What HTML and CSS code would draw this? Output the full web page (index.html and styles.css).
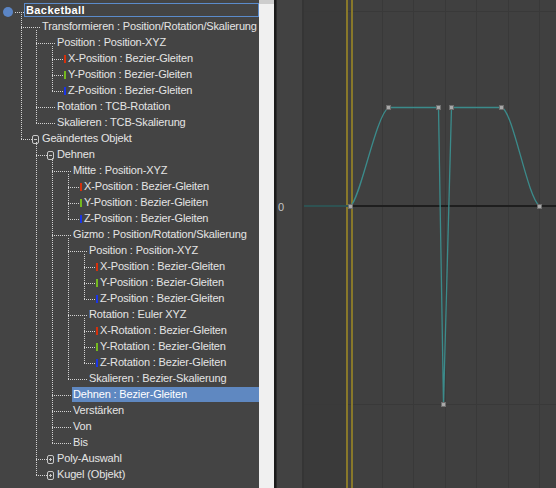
FILE: index.html
```html
<!DOCTYPE html>
<html lang="de">
<head>
    <meta charset="UTF-8">
    <title>Kurveneditor</title>
    <link rel="stylesheet" href="styles.css">
</head>
<body>
    <div class="editor">
        <div class="tree-panel">
            <ul class="tree">
                <li>
                    <div class="row root"><span class="ball"></span><span class="dots"></span><span class="label">Backetball</span></div>
                    <ul>
                        <li>
                            <div class="row"><span class="dots"></span><span class="label">Transformieren : Position/Rotation/Skalierung</span></div>
                            <ul>
                                <li>
                                    <div class="row"><span class="dots"></span><span class="label">Position : Position-XYZ</span></div>
                                    <ul>
                                        <li><div class="row axis"><span class="dots"></span><span class="bar x"></span><span class="label">X-Position : Bezier-Gleiten</span></div></li>
                                        <li><div class="row axis"><span class="dots"></span><span class="bar y"></span><span class="label">Y-Position : Bezier-Gleiten</span></div></li>
                                        <li><div class="row axis"><span class="dots"></span><span class="bar z"></span><span class="label">Z-Position : Bezier-Gleiten</span></div></li>
                                    </ul>
                                </li>
                                <li><div class="row"><span class="dots"></span><span class="label">Rotation : TCB-Rotation</span></div></li>
                                <li><div class="row"><span class="dots"></span><span class="label">Skalieren : TCB-Skalierung</span></div></li>
                            </ul>
                        </li>
                        <li>
                            <div class="row node"><span class="dots"></span><span class="box"></span><span class="label">Geändertes Objekt</span></div>
                            <ul>
                                <li>
                                    <div class="row node"><span class="dots"></span><span class="box"></span><span class="label">Dehnen</span></div>
                                    <ul>
                                        <li>
                                            <div class="row"><span class="dots"></span><span class="label">Mitte : Position-XYZ</span></div>
                                            <ul>
                                                <li><div class="row axis"><span class="dots"></span><span class="bar x"></span><span class="label">X-Position : Bezier-Gleiten</span></div></li>
                                                <li><div class="row axis"><span class="dots"></span><span class="bar y"></span><span class="label">Y-Position : Bezier-Gleiten</span></div></li>
                                                <li><div class="row axis"><span class="dots"></span><span class="bar z"></span><span class="label">Z-Position : Bezier-Gleiten</span></div></li>
                                            </ul>
                                        </li>
                                        <li>
                                            <div class="row"><span class="dots"></span><span class="label">Gizmo : Position/Rotation/Skalierung</span></div>
                                            <ul>
                                                <li>
                                                    <div class="row"><span class="dots"></span><span class="label">Position : Position-XYZ</span></div>
                                                    <ul>
                                                        <li><div class="row axis"><span class="dots"></span><span class="bar x"></span><span class="label">X-Position : Bezier-Gleiten</span></div></li>
                                                        <li><div class="row axis"><span class="dots"></span><span class="bar y"></span><span class="label">Y-Position : Bezier-Gleiten</span></div></li>
                                                        <li><div class="row axis"><span class="dots"></span><span class="bar z"></span><span class="label">Z-Position : Bezier-Gleiten</span></div></li>
                                                    </ul>
                                                </li>
                                                <li>
                                                    <div class="row"><span class="dots"></span><span class="label">Rotation : Euler XYZ</span></div>
                                                    <ul>
                                                        <li><div class="row axis"><span class="dots"></span><span class="bar x"></span><span class="label">X-Rotation : Bezier-Gleiten</span></div></li>
                                                        <li><div class="row axis"><span class="dots"></span><span class="bar y"></span><span class="label">Y-Rotation : Bezier-Gleiten</span></div></li>
                                                        <li><div class="row axis"><span class="dots"></span><span class="bar z"></span><span class="label">Z-Rotation : Bezier-Gleiten</span></div></li>
                                                    </ul>
                                                </li>
                                                <li><div class="row"><span class="dots"></span><span class="label">Skalieren : Bezier-Skalierung</span></div></li>
                                            </ul>
                                        </li>
                                        <li><div class="row selected"><span class="dots"></span><span class="label">Dehnen : Bezier-Gleiten</span></div></li>
                                        <li><div class="row"><span class="dots"></span><span class="label">Verstärken</span></div></li>
                                        <li><div class="row"><span class="dots"></span><span class="label">Von</span></div></li>
                                        <li><div class="row"><span class="dots"></span><span class="label">Bis</span></div></li>
                                    </ul>
                                </li>
                                <li><div class="row node closed"><span class="dots"></span><span class="box"></span><span class="label">Poly-Auswahl</span></div></li>
                                <li><div class="row node closed"><span class="dots"></span><span class="box"></span><span class="label">Kugel (Objekt)</span></div></li>
                            </ul>
                        </li>
                    </ul>
                </li>
            </ul>
        </div>

        <div class="scroll"></div>
        <div class="divider"></div>
        <div class="ruler"><span>0</span></div>

        <!-- Kurvenfenster: x = Bildschirm-x - 304 -->
        <svg class="curves" width="252" height="488" viewBox="0 0 252 488">
            <rect x="0" y="0" width="252" height="488" fill="#404040"/>
            <rect x="0" y="0" width="42" height="488" fill="#3a3a3a"/>

            <g stroke="#393939" stroke-width="1">
                <line x1="78.5" y1="0" x2="78.5" y2="488"/>
                <line x1="109.5" y1="0" x2="109.5" y2="488"/>
                <line x1="141.5" y1="0" x2="141.5" y2="488"/>
                <line x1="172.5" y1="0" x2="172.5" y2="488"/>
                <line x1="204.5" y1="0" x2="204.5" y2="488"/>
                <line x1="235.5" y1="0" x2="235.5" y2="488"/>
                <line x1="0" y1="11.5" x2="252" y2="11.5"/>
                <line x1="0" y1="404.5" x2="252" y2="404.5"/>
            </g>

            <rect x="42" y="0" width="2" height="488" fill="#88782a"/>
            <rect x="47" y="0" width="2" height="488" fill="#88782a"/>

            <rect x="0" y="205" width="46" height="2" fill="#2e5252"/>
            <rect x="46" y="205" width="206" height="2" fill="#1e1e1e"/>

            <path d="M46.5,206 C56,200 72,115 84.5,107.5 L134.5,107.5 L139.5,404.5 L147.5,107.5 L197.5,107.5 C209,110 223,197 235.5,206"
                  fill="none" stroke="#3b8b8b" stroke-width="1.3"/>

            <g fill="#6f6f6f">
                <rect x="44" y="204" width="5" height="5"/>
                <rect x="82" y="105" width="5" height="5"/>
                <rect x="132" y="105" width="5" height="5"/>
                <rect x="137" y="402" width="5" height="5"/>
                <rect x="145" y="105" width="5" height="5"/>
                <rect x="195" y="105" width="5" height="5"/>
                <rect x="233" y="204" width="5" height="5"/>
            </g>
            <g fill="#a9a9a9">
                <rect x="45" y="205" width="3" height="3"/>
                <rect x="83" y="106" width="3" height="3"/>
                <rect x="133" y="106" width="3" height="3"/>
                <rect x="138" y="403" width="3" height="3"/>
                <rect x="146" y="106" width="3" height="3"/>
                <rect x="196" y="106" width="3" height="3"/>
                <rect x="234" y="205" width="3" height="3"/>
            </g>
        </svg>
    </div>
</body>
</html>
```

FILE: styles.css
```css
body {
    margin: 0;
    background-color: #444444;
    font-family: "Liberation Sans", Arial, sans-serif;
    font-size: 11px;
}
.editor {
    display: flex;
    height: 488px;
    overflow: hidden;
}
.tree-panel {
    flex: none;
    width: 259px;
    padding-top: 2px;
    background-color: #444444;
    color: #e4e4e4;
    overflow: hidden;
}

/* Baum */
.tree, .tree ul {
    list-style: none;
    margin: 0;
    padding: 0;
}
.tree ul {
    position: relative;
    margin-left: 16px;
}
.tree > li > ul {
    margin-left: 21px;
}
.tree > li > ul > li > ul {
    margin-left: 15px;
}
.tree li {
    position: relative;
}
.tree ul > li::before,
.tree ul::before {
    content: "";
    position: absolute;
    left: 0;
    width: 1px;
    background: repeating-linear-gradient(to bottom, #d2d2d2 0 1px, transparent 1px 2px);
}
.tree ul > li::before {
    top: 0;
    bottom: 0;
}
.tree ul > li:last-child::before {
    bottom: auto;
    height: 10px;
}
.tree ul::before {
    top: -4px;
    height: 4px;
}
.tree > li > ul::before {
    top: -6px;
    height: 6px;
}

.row {
    display: flex;
    align-items: flex-start;
    height: 16px;
    line-height: 16px;
}
.dots {
    flex: none;
    width: 20px;
    height: 1px;
    margin-top: 9px;
    background: repeating-linear-gradient(to right, #d2d2d2 0 1px, transparent 1px 2px);
}
.label {
    flex: 1;
    min-width: 0;
    padding-left: 1px;
    white-space: nowrap;
    overflow: hidden;
    letter-spacing: -0.15px;
}

.row.node .dots,
.row.axis .dots {
    width: 11px;
}
.box {
    flex: none;
    position: relative;
    width: 5px;
    height: 7px;
    margin-top: 5px;
    margin-right: 2px;
    border: 1px solid #c8c8c8;
    border-radius: 2px;
}
.box::before {
    content: "";
    position: absolute;
    left: 1px;
    top: 3px;
    width: 3px;
    height: 1px;
    background-color: #c8c8c8;
}
.closed .box::after {
    content: "";
    position: absolute;
    left: 2px;
    top: 2px;
    width: 1px;
    height: 3px;
    background-color: #c8c8c8;
}

.bar {
    flex: none;
    width: 2px;
    height: 8px;
    margin: 5px 1px 0 1px;
}
.bar.x { background-color: #d4300c; }
.bar.y { background-color: #74b81e; }
.bar.z { background-color: #1a34e6; }

.root .ball {
    flex: none;
    width: 10px;
    height: 10px;
    margin: 5px 0 0 3px;
    border-radius: 50%;
    background-color: #5b85c5;
}
.root .dots {
    width: 9px;
    margin: 10px 0 0 2px;
}
.root .label {
    height: 12px;
    line-height: 12px;
    margin-top: 1px;
    border: 1px solid #5b8bcb;
    font-weight: bold;
    color: #ffffff;
    letter-spacing: 0.4px;
}

.selected .label {
    height: 15px;
    margin-top: 1px;
    line-height: 15px;
    background-color: #5f88c1;
    color: #ffffff;
}

/* Kurvenbereich */
.scroll {
    flex: none;
    width: 15px;
    background-color: #f0f0f0;
    border-top: 4px solid #cdcdcd;
}
.divider {
    flex: none;
    width: 2px;
    background-color: #1b1b1b;
    border-right: 1px solid #2c2c2c;
}
.ruler {
    flex: none;
    width: 25px;
    padding-top: 199px;
    background-color: #424242;
    border-right: 2px solid #353535;
    color: #c4c4c4;
    line-height: 16px;
}
.ruler span {
    padding-left: 1px;
}
.curves {
    flex: none;
    display: block;
}
```
